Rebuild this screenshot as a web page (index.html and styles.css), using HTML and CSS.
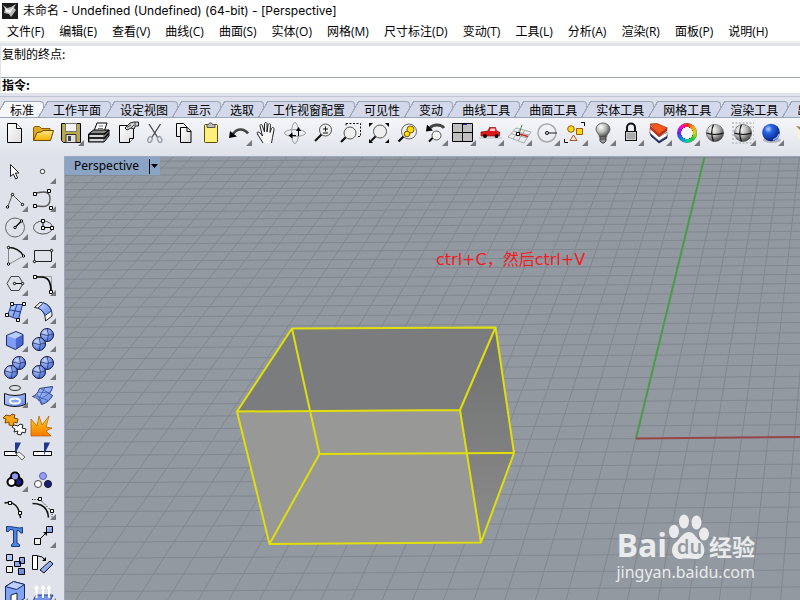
FILE: index.html
```html
<!DOCTYPE html>
<html lang="zh-CN">
<head>
<meta charset="utf-8">
<title>未命名 - Undefined</title>
<link rel="stylesheet" href="styles.css">
</head>
<body>
<svg class="defs" aria-hidden="true">
  <defs>
    <linearGradient id="paper" x2="1" y2="1"><stop offset="0" stop-color="#fff"/><stop offset="1" stop-color="#dcdcdc"/></linearGradient>
    <linearGradient id="gold" x2="0" y2="1"><stop offset="0" stop-color="#ffe680"/><stop offset="1" stop-color="#f5b100"/></linearGradient>
    <linearGradient id="blue" x2="1" y2="1"><stop offset="0" stop-color="#c3d3ff"/><stop offset="1" stop-color="#5c86e8"/></linearGradient>
    <linearGradient id="fire" x2="0" y2="1"><stop offset="0" stop-color="#ffd21a"/><stop offset="1" stop-color="#f57a00"/></linearGradient>
    <radialGradient id="ballBlue" cx=".35" cy=".3" r=".7"><stop offset="0" stop-color="#c8d6ff"/><stop offset="1" stop-color="#4a6fd8"/></radialGradient>
    <radialGradient id="ballGray" cx=".35" cy=".3" r=".75"><stop offset="0" stop-color="#fff"/><stop offset=".5" stop-color="#b8b8b8"/><stop offset="1" stop-color="#3c3c3c"/></radialGradient>
    <radialGradient id="ballDeep" cx=".35" cy=".3" r=".75"><stop offset="0" stop-color="#bcd6ff"/><stop offset=".3" stop-color="#2a66e8"/><stop offset="1" stop-color="#061a78"/></radialGradient>
    <linearGradient id="side" x2="0" y2="1"><stop offset="0" stop-color="#6e6f70"/><stop offset="1" stop-color="#8c8c8b"/></linearGradient>
    <symbol id="more" viewBox="0 0 28 28"><path d="M27 21v6h-6z" fill="#77787c"/></symbol>
    <symbol id="balls" viewBox="0 0 28 28">
      <g stroke="#10183c" fill="url(#ballBlue)"><circle cx="18" cy="10" r="6.500"/><circle cx="10" cy="19" r="6.500"/></g>
      <path d="M12 9q6 3 12.500 0M18 3.500q3 6 0 13M4 18q6 3 12.500 0M10 12.500q3 6 0 13" fill="none" stroke="#24386f" stroke-width=".8"/>
    </symbol>
    <symbol id="wireball" viewBox="0 0 28 28">
      <circle cx="14" cy="14" r="8.600" fill="url(#ballGray)" stroke="#555" stroke-width=".6"/>
      <path d="M5.500 14q8.500 3 17 0M12.500 5.500q-3.500 8 0 17" fill="none" stroke="#111" stroke-width="1.200"/>
    </symbol>
  </defs>
</svg>

<header class="titlebar">
  <svg class="app-icon" viewBox="0 0 16 16"><rect width="16" height="16" fill="#1c1c1c"/><path d="M1 2l4 3 4-1 5-3-2 4 2 2-5 7-2-3-5-1 1-4z" fill="#bbb"/><path d="M3 5l4 2 5-3-4 6-4-1z" fill="#f4f4f4"/></svg>
  <h1>未命名 - Undefined (Undefined) (64-bit) - [Perspective]</h1>
</header>

<nav class="menubar">
  <button>文件(F)</button><button>编辑(E)</button><button>查看(V)</button><button>曲线(C)</button><button>曲面(S)</button><button>实体(O)</button><button>网格(M)</button><button>尺寸标注(D)</button><button>变动(T)</button><button>工具(L)</button><button>分析(A)</button><button>渲染(R)</button><button>面板(P)</button><button>说明(H)</button>
</nav>

<section class="command">
  <p class="history">复制的终点:</p>
  <div class="prompt"><label for="cmd">指令:</label><input id="cmd" type="text" autocomplete="off"></div>
</section>

<nav class="tabs">
  <button class="tab active">标准</button><button class="tab">工作平面</button><button class="tab">设定视图</button><button class="tab">显示</button><button class="tab">选取</button><button class="tab">工作视窗配置</button><button class="tab">可见性</button><button class="tab">变动</button><button class="tab">曲线工具</button><button class="tab">曲面工具</button><button class="tab">实体工具</button><button class="tab">网格工具</button><button class="tab">渲染工具</button><button class="tab">出图</button>
</nav>

<div class="toolbar">
  <button aria-label="新建"><svg viewBox="0 0 28 28"><path d="M6.500 4.500h9l5 5v14h-14z" fill="url(#paper)" stroke="#000"/><path d="M15.500 4.500v5h5" fill="#fff" stroke="#000"/></svg></button>
  <button aria-label="打开"><svg viewBox="0 0 28 28"><path d="M4.500 21V9l1-1.500h5l2 2h8.500V12" fill="#e0a91e" stroke="#8a5a00"/><path d="M4.500 21.500L8 13.500l4-.5 2-1.500h10.500l-3 10z" fill="url(#gold)" stroke="#6b4700"/></svg></button>
  <button aria-label="保存"><svg viewBox="0 0 28 28"><path d="M4.500 4.500h19v19h-17l-2-2z" fill="#b9a94e" stroke="#000"/><path d="M8.500 4.500h11v8h-11z" fill="#f3f3f3" stroke="#777"/><path d="M9 15.500h10v8H9z" fill="#e0e0e0" stroke="#333"/><path d="M11 17h3v5h-3z" fill="#444"/></svg><svg class="more"><use href="#more"/></svg></button>
  <button aria-label="打印"><svg viewBox="0 0 28 28"><path d="M9 12l3-8h10l-3 9" fill="#fff" stroke="#000"/><path d="M14 7h4M13 9.500h5" stroke="#777"/><path d="M3.500 15l5-4h15.500v6l-5 6H3.500z" fill="#888" stroke="#000"/><path d="M4 15h15.500L24 11M4 19h15.500l4-4.500" fill="none" stroke="#000" stroke-width="1.600"/><path d="M5 17h13M5 21h13" stroke="#eee" stroke-width="1.600"/></svg></button>
  <button aria-label="文件属性"><svg viewBox="0 0 28 28"><path d="M6.500 6.500h14v13l-4 4h-10z" fill="url(#paper)" stroke="#000"/><path d="M16.500 23.500v-4h4" fill="#fff" stroke="#000"/><path d="M12 9l5-5 4-1h4.500v4h-3l-1.500 3-3-1-4 2z" fill="#d0d0d0" stroke="#222"/><path d="M14 8.500l4-2.500M18 9l3-3M22 3v4" stroke="#222" stroke-width=".8"/></svg></button>
  <button aria-label="剪切"><svg viewBox="0 0 28 28"><path d="M8 5l9 14M19.500 5l-9 14" stroke="#444" stroke-width="1.300"/><g fill="none" stroke="#999eac" stroke-width="1.400"><ellipse cx="9" cy="20.500" rx="2" ry="3" transform="rotate(25 9 20.500)"/><ellipse cx="18.700" cy="20.500" rx="2" ry="3" transform="rotate(-25 18.700 20.500)"/></g></svg></button>
  <button aria-label="复制"><svg viewBox="0 0 28 28"><g fill="url(#paper)" stroke="#000"><path d="M7.500 4.500h7l3 3v10h-10z"/><path d="M11.500 8.500h7l3.500 3.500v11.500H11.500z"/><path d="M18 8.500v4h4"/></g></svg></button>
  <button aria-label="粘贴"><svg viewBox="0 0 28 28"><rect x="7.500" y="5.500" width="13" height="18" rx="1" fill="#ffef7c" stroke="#5e4b00"/><path d="M10 8.500h8v-3h-2.500L14.500 4h-2l-1 1.500H10z" fill="#bbb" stroke="#555"/></svg></button>
  <button aria-label="撤销"><svg viewBox="0 0 28 28"><path d="M8 15c4-6 11-6 15-.5" fill="none" stroke="#444" stroke-width="2.600"/><path d="M4 19l1-7 7 5.500z" fill="#000"/></svg><svg class="more"><use href="#more"/></svg></button>
  <button aria-label="平移"><svg viewBox="0 0 28 28"><path d="M10 24l-5-8c-2-3 0-4 2-2l2.500 3L7 7c0-2 2-2 2.500 0l2 6V5c0-2 2.500-2 2.500 0v8l1-7c.5-2 3-1.500 2.500.5l-.5 7 1.500-4c1-2 2.800-1 2.500 1l-1.500 8-1 5.500" fill="#f7f7f7" stroke="#222"/></svg></button>
  <button aria-label="旋转视图"><svg viewBox="0 0 28 28"><g fill="none" stroke="#999"><ellipse cx="14" cy="14" rx="10.500" ry="3.500"/><ellipse cx="14" cy="14" rx="3.500" ry="10.500"/></g><path d="M9 16.500h6M17.500 10v7" stroke="#000"/><path d="M11.500 13.500v6L7.500 16.500zM15 12h5l-2.500-4z" fill="#000"/></svg></button>
  <button aria-label="缩放"><svg viewBox="0 0 28 28"><path d="M6 22l7-7" stroke="#111" stroke-width="2.200"/><circle cx="16.500" cy="11" r="6" fill="#efefef" stroke="#555"/><path d="M14 10h5M16.500 7.500v5M14 14h5" stroke="#111"/></svg></button>
  <button aria-label="框选缩放"><svg viewBox="0 0 28 28"><path d="M9 4.500h14.500v13h-4M9 4.500v3" fill="none" stroke="#111" stroke-dasharray="2 1.500"/><path d="M4 23l5-5" stroke="#111" stroke-width="2.200"/><circle cx="13" cy="14" r="6" fill="#efefef" stroke="#555"/></svg></button>
  <button aria-label="缩放至最大范围"><svg viewBox="0 0 28 28"><path d="M4 4h4L4 8zM24 4h-4l4 4zM4 24h4l-4-4zM24 24h-4l4-4z"/><path d="M6 22l5-5" stroke="#111" stroke-width="2"/><circle cx="15" cy="12.500" r="6.500" fill="#efefef" stroke="#555"/></svg></button>
  <button aria-label="缩放选取物件"><svg viewBox="0 0 28 28"><path d="M5.500 22.500l5-5" stroke="#111" stroke-width="2.300"/><circle cx="16" cy="12.500" r="7.500" fill="#eee" stroke="#666"/><g fill="#fd0" stroke="#755a00"><circle cx="17.500" cy="10.500" r="3.500"/><circle cx="14" cy="15" r="2.800"/></g></svg></button>
  <button aria-label="上一个视图"><svg viewBox="0 0 28 28"><path d="M9 9c3-4 11-4 14 0" fill="none" stroke="#444" stroke-width="2.800"/><path d="M5 12.500l1-7 6 6z"/><path d="M8 22.500l4-4" stroke="#111" stroke-width="2"/><circle cx="15.500" cy="16.500" r="4.500" fill="#f4f4f4" stroke="#555"/></svg><svg class="more"><use href="#more"/></svg></button>
  <button aria-label="四个工作视窗"><svg viewBox="0 0 28 28"><path d="M3.500 4.500h20v18h-20z" fill="#bfbfbf" stroke="#000"/><path d="M13.500 4v19M3 13.500h21" stroke="#000"/><path d="M14 5.500h4" stroke="#1530d0"/></svg><svg class="more"><use href="#more"/></svg></button>
  <button aria-label="设置视图"><svg viewBox="0 0 28 28"><path d="M2 19h23" stroke="#bbb"/><path d="M4 17v-4l7-1 1.500-3.500h6l1 3.500 3 1v4z" fill="#e01818" stroke="#8d0808" stroke-width=".7"/><path d="M12.500 12l1.200-2.500h4.500V12z" fill="#fbd0d0"/><circle cx="8" cy="17" r="1.900"/><circle cx="19.500" cy="17" r="1.900"/></svg><svg class="more"><use href="#more"/></svg></button>
  <button aria-label="工作平面"><svg viewBox="0 0 28 28"><path d="M3 18L11 9l15 4-7 11zM6 14.500l16 4.500M8.500 12L24 16M8 20l7-10M13 22l7-11" fill="none" stroke="#aaa"/><path d="M14 15l3-9" stroke="#2a9a3a"/><path d="M14 15l9 2.500" stroke="#c22" stroke-width="1.500"/><path d="M11.500 13.500h3v3h-3z" fill="#fff" stroke="#000"/></svg><svg class="more"><use href="#more"/></svg></button>
  <button aria-label="圆形选项"><svg viewBox="0 0 28 28"><circle cx="14" cy="14" r="9" fill="none" stroke="#aaa" stroke-width="1.500"/><path d="M14 14h10" stroke="#222"/><circle cx="14" cy="14" r="1.500" fill="#fff" stroke="#000"/></svg><svg class="more"><use href="#more"/></svg></button>
  <button aria-label="选取过滤"><svg viewBox="0 0 28 28"><path d="M20 3.500h3.500V7M3.500 20v3.500H7" fill="none" stroke="#000"/><g fill="#ffd91a" stroke="#a35b00"><circle cx="10" cy="10" r="3.300"/><path d="M15.500 9.500h6v6h-6z"/></g><path d="M12.500 16l3.500 5.500H9z" fill="#ffe9d9" stroke="#a3542a"/></svg><svg class="more"><use href="#more"/></svg></button>
  <button aria-label="显示隐藏"><svg viewBox="0 0 28 28"><path d="M10.500 18c0-3-3.500-4-3.500-8a7 6 0 0 1 14 0c0 4-3.500 5-3.500 8z" fill="url(#ballGray)" stroke="#666"/><path d="M11 18h6v4l-2 2h-2l-2-2z" fill="#999" stroke="#444"/><path d="M11 20h6" stroke="#333"/></svg><svg class="more"><use href="#more"/></svg></button>
  <button aria-label="锁定"><svg viewBox="0 0 28 28"><path d="M10 12V8.500a4 4 0 0 1 8 0V12" fill="none" stroke="#111" stroke-width="2"/><rect x="8.500" y="12.500" width="11" height="9" fill="#ccc" stroke="#111"/><path d="M10 15h8M10 17h8M10 19h8" stroke="#888"/></svg><svg class="more"><use href="#more"/></svg></button>
  <button aria-label="图层"><svg viewBox="0 0 28 28"><path d="M5 13l9 8 8-5v3l-8 5-8-7z" fill="#17338f" stroke="#111" stroke-width=".7"/><path d="M5 9l9 9 8-5v4l-8 5-9-8z" fill="#fff" stroke="#555" stroke-width=".6"/><path d="M5 6l9 9 8-6v3l-8 6-9-8z" fill="#c62f17"/><path d="M5 5l7-.5L22.500 9 14 15z" fill="#f9581c" stroke="#7c2005" stroke-width=".6"/></svg><svg class="more"><use href="#more"/></svg></button>
  <button aria-label="颜色"><span class="wheel"></span><svg class="more"><use href="#more"/></svg></button>
  <button aria-label="着色"><svg viewBox="0 0 28 28"><use href="#wireball"/></svg></button>
  <button aria-label="着色视窗"><svg viewBox="0 0 28 28"><path d="M3 4h22M3 8h22M3 12h22M3 16h22M3 20h22M3 24h20" stroke="#c6c7ca" stroke-width="2" stroke-dasharray="2 1.500"/><use href="#wireball"/></svg><svg class="more"><use href="#more"/></svg></button>
  <button aria-label="渲染"><svg viewBox="0 0 28 28"><ellipse cx="15" cy="21" rx="9" ry="3" fill="#b4b7bf"/><circle cx="14" cy="13.500" r="8.800" fill="url(#ballDeep)"/><path d="M16 21q5-2 6-6" fill="none" stroke="#8db4ff" stroke-width="1.500"/></svg><svg class="more"><use href="#more"/></svg></button>
  <button aria-label="灯光"><svg viewBox="0 0 28 28"><path d="M10 6l6 1 6 9-9 4z" fill="#f4f1dc"/><path d="M11 7l5 1v4z" fill="#888672"/></svg></button>
</div>

<main class="workspace">
  <aside class="palette">
    <button aria-label="选取"><svg viewBox="0 0 28 28"><path d="M9.500 7.500v12l2.800-2.500 2.400 5 2-1-2.300-5h3.600z" fill="#fff" stroke="#222"/></svg></button>
    <button aria-label="点"><svg viewBox="0 0 28 28"><circle cx="13.500" cy="14.500" r="2.200" fill="#fff" stroke="#333"/></svg><svg class="more"><use href="#more"/></svg></button>
    <button aria-label="多重直线"><svg viewBox="0 0 28 28"><path d="M6.500 22.500l5-13 10 10" fill="none" stroke="#555"/><g fill="#fff" stroke="#000"><circle cx="6.500" cy="22" r="1.200"/><circle cx="11.500" cy="9.500" r="1.200"/><circle cx="21.500" cy="19.500" r="1.200"/></g></svg><svg class="more"><use href="#more"/></svg></button>
    <button aria-label="曲线"><svg viewBox="0 0 28 28"><path d="M6 9c3-2 6-2 9-2 4 0 6 3 6 7 0 5-3 7.500-7 7.500L6 21" fill="none" stroke="#555" stroke-width="1.300"/><path d="M4.500 7.500h3v3h-3zM18.500 4.500h3v3h-3zM4.500 19.500h3v3h-3zM20.500 21.500h3v3h-3z" fill="#fff" stroke="#000"/></svg><svg class="more"><use href="#more"/></svg></button>
    <button aria-label="圆"><svg viewBox="0 0 28 28"><circle cx="14" cy="14.500" r="9.500" fill="none" stroke="#666"/><path d="M14 14.500L20.500 8" stroke="#000" stroke-width="1.300"/><g fill="#fff" stroke="#000"><circle cx="14" cy="14.500" r="1.200"/><circle cx="20.500" cy="8" r="1.200"/></g></svg><svg class="more"><use href="#more"/></svg></button>
    <button aria-label="椭圆"><svg viewBox="0 0 28 28"><ellipse cx="14" cy="14.500" rx="9.500" ry="6.500" fill="none" stroke="#555"/><path d="M14 8v6.500h9" fill="none" stroke="#000"/><path d="M12.500 6.500h3v3h-3zM12.500 13.500h3v3h-3zM21.500 13.500h3v3h-3z" fill="#fff" stroke="#000"/></svg><svg class="more"><use href="#more"/></svg></button>
    <button aria-label="圆弧"><svg viewBox="0 0 28 28"><path d="M7.500 6.500v17l15-8.500" fill="none" stroke="#888"/><path d="M7.500 6.500q10 0 15 8.500" fill="none" stroke="#111" stroke-width="1.400"/><g fill="#fff" stroke="#000"><circle cx="7.500" cy="6.500" r="1.200"/><circle cx="7.500" cy="23" r="1.200"/><circle cx="22.500" cy="15" r="1.200"/></g></svg><svg class="more"><use href="#more"/></svg></button>
    <button aria-label="矩形"><svg viewBox="0 0 28 28"><path d="M5.500 9.500h17v11h-17z" fill="none" stroke="#222"/><g fill="#fff" stroke="#000"><circle cx="22.500" cy="9.500" r="1.200"/><circle cx="5.500" cy="20.500" r="1.200"/></g></svg><svg class="more"><use href="#more"/></svg></button>
    <button aria-label="多边形"><svg viewBox="0 0 28 28"><path d="M6 14.500l4-7h8l4 7-4 7h-8z" fill="none" stroke="#444"/><path d="M13.500 14.500H22" stroke="#000"/><g fill="#fff" stroke="#000"><circle cx="13.500" cy="14.500" r="1.200"/><circle cx="21.500" cy="14.500" r="1.200"/></g></svg><svg class="more"><use href="#more"/></svg></button>
    <button aria-label="曲线圆角"><svg viewBox="0 0 28 28"><path d="M6 7.500h16.500V23" fill="none" stroke="#999"/><path d="M6 8h6c7 0 10 4 10 15" fill="none" stroke="#000" stroke-width="1.700"/><path d="M4.500 6.500h3v3h-3zM20.500 21.500h3v3h-3z" fill="#fff" stroke="#000"/></svg><svg class="more"><use href="#more"/></svg></button>
    <button aria-label="曲面"><svg viewBox="0 0 28 28"><path d="M10.500 7.500h11l-4 15-11-4z" fill="url(#blue)" stroke="#223a80"/><path d="M16 7.500l-4 12M9 13l11 2" stroke="#223a80"/><path d="M9.500 5.500h3v3h-3zM21.500 5.500h3v3h-3zM4.500 16.500h3v3h-3zM15.500 21.500h3v3h-3z" fill="#fff" stroke="#000"/></svg><svg class="more"><use href="#more"/></svg></button>
    <button aria-label="衔接曲面"><svg viewBox="0 0 28 28"><path d="M5.500 10.500L11 5.500c7 0 12.500 5 12 13.500l-6.500 5c0-8-4-13-11-13.500z" fill="#f6f6f6" stroke="#222"/><path d="M9 11l5.500-5c4 1 6.500 4 8 8l-6.500 4.500C15 15 12.500 12.500 9 11z" fill="url(#blue)" stroke="#223a80"/></svg><svg class="more"><use href="#more"/></svg></button>
    <button aria-label="立方体"><svg viewBox="0 0 28 28"><path d="M5.500 10.500l9 3v11l-9-4z" fill="#7f9cf6"/><path d="M5.500 10.500L15 6.500l7 3-7.500 4z" fill="#b9ccff"/><path d="M14.500 13.500l7.500-4v10l-7.500 5z" fill="#4a68d4"/><path d="M5.500 10.500L15 6.500l7 3v10l-7.500 5-9-4z" fill="none" stroke="#172a66"/></svg><svg class="more"><use href="#more"/></svg></button>
    <button aria-label="并集"><svg viewBox="0 0 28 28"><use href="#balls"/></svg><svg class="more"><use href="#more"/></svg></button>
    <button aria-label="差集"><svg viewBox="0 0 28 28"><use href="#balls"/></svg><svg class="more"><use href="#more"/></svg></button>
    <button aria-label="交集"><svg viewBox="0 0 28 28"><use href="#balls"/></svg><svg class="more"><use href="#more"/></svg></button>
    <button aria-label="投影曲线"><svg viewBox="0 0 28 28"><ellipse cx="14" cy="7" rx="5.500" ry="2.500" fill="none" stroke="#333"/><path d="M3.500 12.500q10.500 4 21 0v11q-10.500 4-21 0z" fill="url(#blue)" stroke="#111"/><ellipse cx="14" cy="20" rx="5" ry="2.500" fill="#86a5f2" stroke="#fff" stroke-width="2"/></svg><svg class="more"><use href="#more"/></svg></button>
    <button aria-label="网格"><svg viewBox="0 0 28 28"><path d="M3.500 15.500c3-1 6-4 7-8l13-2c0 3-2 5-3 7l3 2c-2 4-5 7-11 9-1-4-5-7-9-8z" fill="url(#blue)" stroke="#223a80"/><path d="M9 11l12 1M6 14.500l13 5M16 6.500l-6 11M20.500 12L9 20M12 8l8 4M8 13l5 9" stroke="#3c58a8" stroke-width=".8"/></svg><svg class="more"><use href="#more"/></svg></button>
    <button aria-label="组合"><svg viewBox="0 0 28 28"><path d="M5 6l4 1 2-2 3 1-1 3 4 1-1 4-3-1-1 4-4-1v-3l-4 1 1-4-3-1z" fill="#f9a51a" stroke="#7d4700"/><path d="M13 16l4 1 2-2 3 1-1 3 4 1-1 4-3-1-1 3-4-1 1-3-4 1 1-3-3-2z" fill="#fff" stroke="#222"/></svg></button>
    <button aria-label="炸开"><svg viewBox="0 0 28 28"><path d="M2 27V10l6 7 2-10 3 9 7-9-3 11 6 1-6 3 5 5z" fill="url(#fire)" stroke="#b85a00" stroke-width=".7"/></svg></button>
    <button aria-label="修剪"><svg viewBox="0 0 28 28"><path d="M3.500 14.500h12v4h-12z" fill="#fff" stroke="#000"/><path d="M14 5.500h6l-4 8-2 4z" fill="#1d3a90"/><path d="M15 17l3-2 6 5-3 3z" fill="#eee" stroke="#666"/></svg></button>
    <button aria-label="分割"><svg viewBox="0 0 28 28"><path d="M4.500 14.500h18v4h-18z" fill="#fff" stroke="#000"/><path d="M15 5.500h6l-4 8-2 5z" fill="#1d3a90"/></svg></button>
    <button aria-label="群组"><svg viewBox="0 0 28 28"><g stroke="#000" stroke-width="2"><circle cx="14" cy="11.500" r="4" fill="#8f97ee"/><circle cx="17.500" cy="17" r="4" fill="#1d1f80"/><circle cx="10.500" cy="17" r="4" fill="#fff"/></g><circle cx="14" cy="11.500" r="3" fill="#8f97ee"/></svg><svg class="more"><use href="#more"/></svg></button>
    <button aria-label="解散群组"><svg viewBox="0 0 28 28"><circle cx="14" cy="11" r="3.500" fill="#98a0f4" stroke="#5560b0"/><circle cx="9" cy="19" r="3.500" fill="#fff" stroke="#444"/><circle cx="19" cy="19" r="3.500" fill="#1d1f80" stroke="#111"/></svg></button>
    <button aria-label="编辑点"><svg viewBox="0 0 28 28"><path d="M3.500 10q14-3 16 15" fill="none" stroke="#111" stroke-width="1.500"/><path d="M7.500 8.500h3v3h-3zM17.500 18.500h3v3h-3z" fill="#fff" stroke="#000"/></svg></button>
    <button aria-label="控制点"><svg viewBox="0 0 28 28"><path d="M3 6.500h8l12 12v7" fill="none" stroke="#000" stroke-dasharray="1 1.500"/><path d="M3.500 10.500q15 0 16 14" fill="none" stroke="#111" stroke-width="1.700"/><path d="M9.500 4.500h3v3h-3zM21.500 16.500h3v3h-3z" fill="#fff" stroke="#000"/></svg><svg class="more"><use href="#more"/></svg></button>
    <button aria-label="文字"><svg viewBox="0 0 28 28"><path d="M5.500 5.500h3l10 1.500 3-.5v5.500h-2l-1-2-2.500-.5V22l2.500 1.500v2h-8v-2l2-1.500V9L9 8.500l-1.500 2h-2z" fill="#4f83e4" stroke="#1a3778"/></svg></button>
    <button aria-label="移动"><svg viewBox="0 0 28 28"><path d="M11 18l6-6" stroke="#000"/><path d="M18 11v4l-4-4z"/><path d="M17.500 5.500h6v6h-6z" fill="url(#blue)" stroke="#000"/><path d="M5.500 17.500h6v6h-6z" fill="#eee" stroke="#000"/></svg><svg class="more"><use href="#more"/></svg></button>
    <button aria-label="复制物件"><svg viewBox="0 0 28 28"><g fill="url(#blue)" stroke="#000"><path d="M5.500 5.500h6v6h-6zM18.500 8.500h5v6h-5zM13.500 12.500h6v5h-6zM17.500 19.500h6v6h-6z"/><path d="M5.500 17.500h6v6h-6z" fill="#f2f2ea"/></g></svg></button>
    <button aria-label="旋转物件"><svg viewBox="0 0 28 28"><path d="M3.500 6.500h5v14h-5z" fill="#fff" stroke="#000"/><path d="M9 7q5 0 7 4" fill="none" stroke="#000"/><path d="M17 8v4h-4z"/><path d="M11 21l10-9 3 3-9 9z" fill="url(#blue)" stroke="#111"/></svg></button>
    <button aria-label="实体编辑"><svg viewBox="0 0 28 28"><path d="M4.500 9.500l8-5 11 3v14l-10 6-9-3z" fill="#7fa3f5" stroke="#172a66"/><path d="M4.500 9.500l8-5 11 3-8 5z" fill="#bdd0ff" stroke="#172a66"/><path d="M10 18l6-2v9h-6z" fill="#fff" stroke="#222"/></svg><svg class="more"><use href="#more"/></svg></button>
    <button aria-label="挤出"><svg viewBox="0 0 28 28"><path d="M3 26l4-8h17l-4 8z" fill="#7394e8" stroke="#26408c"/><path d="M7.500 21V9M14 21V9M20 21V9" stroke="#fff" stroke-width="2"/><path d="M5 12l2.500-4 2.500 4zM11.500 12L14 8l2.500 4zM17.500 12L20 8l2.500 4z" fill="#fff"/></svg><svg class="more"><use href="#more"/></svg></button>
  </aside>

  <section class="viewport">
    <svg class="scene" viewBox="65 157 735 443" preserveAspectRatio="xMinYMin slice" role="img" aria-label="透视图">
      <path id="grid" class="grid"/>
      <path class="axis-y" d="M636 438.500L704.500 157"/>
      <path class="axis-x" d="M636 438.500L800 437"/>
      <path d="M292 328.500L495.500 327.500 460 410 237 411.500z" fill="#7b7c7e"/>
      <path d="M495.500 327.500L514 453 481 542.500 460 410z" fill="url(#side)"/>
      <path d="M237 411.500L460 410 481 542.500 269.500 544z" fill="#989896"/>
      <path class="edges" d="M292 328.500L495.500 327.500 460 410 237 411.500zM495.500 327.500L514 453 481 542.500 460 410M237 411.500L269.500 544 481 542.500M292 328.500L319.500 454 514 453M319.500 454L269.500 544"/>
    </svg>
    <button class="view-label"><span>Perspective</span><svg viewBox="0 0 9 16"><path d="M.5 1v15" stroke="#000"/><path d="M2 6h7l-3.500 4z"/></svg></button>
    <p class="note">ctrl+C，然后ctrl+V</p>
    <div class="watermark">
      <div class="brand"><span>Bai</span><span class="paw"><svg viewBox="0 0 42 46"><g fill="#e9ebec"><ellipse cx="7" cy="17.500" rx="5" ry="6.800"/><ellipse cx="17" cy="7.500" rx="5" ry="7"/><ellipse cx="29.500" cy="8.500" rx="5" ry="7"/><ellipse cx="37" cy="20" rx="5" ry="6.500"/><path d="M22 18c5 0 7 6 12 10 5 5 5 16-4 17-4 0-12-1-16 0-10 0-11-11-6-16 5-4 8-11 14-11z"/></g></svg><b>du</b></span><span class="cn">经验</span></div>
      <div class="site">jingyan.baidu.com</div>
    </div>
  </section>
</main>
<script src="grid.js"></script>
</body>
</html>
```
FILE: styles.css
```css
* { box-sizing: border-box; }

body {
  margin: 0;
  height: 100vh;
  display: flex;
  flex-direction: column;
  overflow: hidden;
  background: #dfe2ea;
  color: #000;
  font: 12px/16px "Noto Sans", "Noto Sans CJK SC", sans-serif;
}

button {
  padding: 0;
  border: 0;
  background: none;
  color: inherit;
  font: inherit;
  white-space: nowrap;
}

p, h1 { margin: 0; }

svg { display: block; }

.defs { position: absolute; width: 0; height: 0; }

.titlebar {
  display: flex;
  align-items: center;
  gap: 5px;
  height: 22px;
  padding-left: 2px;
  background: #fff;
}

.titlebar h1 {
  font: 400 12px/16px Inter, "Noto Sans CJK SC", sans-serif;
}

.app-icon { width: 16px; height: 16px; }

.menubar {
  display: flex;
  gap: 15px;
  height: 21px;
  padding: 2px 0 1px 7px;
  background: #fff;
  border-bottom: 2px solid #f0f0f0;
  font-family: "Open Sans", "Noto Sans CJK SC", sans-serif;
}

.command {
  margin: 3px 0 0 1px;
  background: #fff;
  font-family: "Noto Sans CJK SC", sans-serif;
}

.history {
  height: 32px;
  padding-left: 1px;
  border-bottom: 1px solid #9aa5b4;
}

.prompt { display: flex; height: 15px; padding-left: 1px; }

.prompt label { font-weight: 700; line-height: 14px; }

.prompt input {
  flex: 1;
  min-width: 0;
  padding: 0 4px;
  border: 0;
  outline: 0;
  background: none;
  font: inherit;
}

.tabs {
  display: flex;
  gap: 4px;
  height: 22px;
  margin-top: 3px;
  padding: 4px 0 0 5px;
  border-top: 1px solid #bfc5d2;
  border-bottom: 1px solid #9da7ba;
  overflow: hidden;
  font-family: "Noto Sans CJK SC", sans-serif;
}

.tab {
  position: relative;
  flex: none;
  height: 17px;
  padding: 0 9px 0 5px;
  border: solid #9da7ba;
  border-width: 1px 1px 0 0;
  border-radius: 0 4px 0 0;
  background: #d3d9ea;
  line-height: 14px;
}

.tab::before {
  content: "";
  position: absolute;
  top: -1px;
  left: -10px;
  width: 10px;
  height: 17px;
  background: linear-gradient(to bottom right, transparent 46%, #9da7ba 47%, #9da7ba 53%, #d3d9ea 54%);
}

.tab.active { background: #f6f7fa; }

.tab.active::before { background: linear-gradient(to bottom right, transparent 46%, #9da7ba 47%, #9da7ba 53%, #f6f7fa 54%); }

.toolbar {
  display: flex;
  height: 38px;
  padding: 1px 0 9px 1px;
  overflow: hidden;
  background: linear-gradient(#f5f6f9, #dfe2ea);
}

.toolbar button,
.palette button {
  position: relative;
  flex: none;
  width: 28px;
  height: 28px;
}

.toolbar svg,
.palette svg { width: 28px; height: 28px; }

.more { position: absolute; inset: 0; }

.wheel {
  display: block;
  width: 20px;
  height: 20px;
  margin: 0 4px;
  border-radius: 50%;
  background: radial-gradient(circle, #f4f5f8 40%, #444 42%, transparent 46%, transparent 66%, #444 70%), conic-gradient(#f22, #f90, #cd0, #2c2, #0ca, #08e, #62f, #f0d, #f22);
}

.workspace { flex: 1; display: flex; min-height: 0; }

.palette {
  flex: none;
  display: grid;
  grid-template-columns: repeat(2, 28px);
  grid-auto-rows: 28px;
  width: 64px;
  padding: 1px 0 0 1px;
  overflow: hidden;
}

.viewport {
  position: relative;
  flex: 1;
  min-width: 0;
  border: solid #9ba6bb;
  border-width: 1px 0 0 1px;
  background: #9299a1;
  overflow: hidden;
}

.scene { width: 100%; height: 100%; }

.grid { fill: none; stroke: #83878f; }

.axis-x { stroke: #994648; stroke-width: 2; }

.axis-y { stroke: #4a9c4a; stroke-width: 2; }

.edges { fill: none; stroke: #e0df0c; stroke-width: 2; stroke-linejoin: round; }

.view-label {
  position: absolute;
  top: 0;
  left: 0;
  display: flex;
  align-items: center;
  gap: 10px;
  height: 18px;
  padding: 0 2px 0 9px;
  background: #8ba4c3;
}

.view-label svg { width: 9px; height: 16px; }

.note {
  position: absolute;
  top: 91px;
  left: 371px;
  color: #f01c24;
  font: 16px/24px "DejaVu Sans", "Noto Sans CJK SC", sans-serif;
}

.watermark {
  position: absolute;
  right: 45px;
  bottom: 16px;
  color: #e9ebec;
}

.brand {
  display: flex;
  align-items: flex-end;
  height: 46px;
  font: 700 32px/30px "Open Sans", sans-serif;
}

.paw { position: relative; width: 42px; height: 46px; }

.paw svg { width: 42px; height: 46px; }

.paw b {
  position: absolute;
  bottom: 1px;
  left: 10px;
  color: #929aa1;
  font-size: 20px;
  font-weight: 600;
  line-height: 24px;
}

.brand .cn {
  font: 700 23px/26px "Noto Sans CJK SC", sans-serif;
  margin-bottom: 1px;
}

.site { font: 16px/24px "Noto Sans", sans-serif; }
```
FILE: grid.js
```js
// Ground plane in perspective: lines along Y converge at (VX, VY),
// lines along X stay almost level and get closer toward the horizon.
const VX = 880, VY = -564;
const OX = 636, OY = 438.5;
const TOP = 150, BOTTOM = 620;
let d = "";
for (let k = -34; k <= 14; k++) {
  const x = OX + 26.4 * k;
  const at = y => x + (VX - x) * (OY - y) / (OY - VY);
  d += `M${at(TOP).toFixed(1)} ${TOP}L${at(BOTTOM).toFixed(1)} ${BOTTOM}`;
}
for (let n = -12; n <= 31; n++) {
  const y = 76850 / (76.9 + n) - 560.7;
  d += `M60 ${(y + 3.7).toFixed(1)}L820 ${(y - 1.2).toFixed(1)}`;
}
document.getElementById("grid").setAttribute("d", d);
```
